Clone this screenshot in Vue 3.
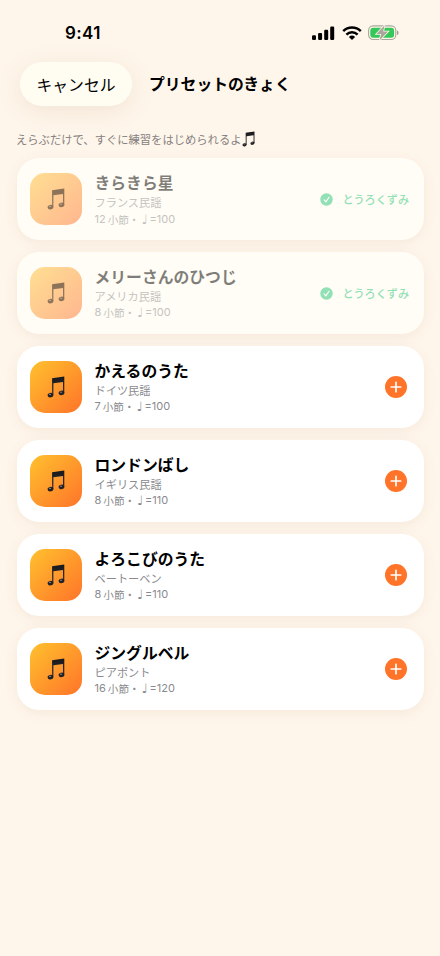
<script setup>
const songs = [
  { title: 'きらきら星', by: 'フランス民謡', bars: 12, bpm: 100, done: true },
  { title: 'メリーさんのひつじ', by: 'アメリカ民謡', bars: 8, bpm: 100, done: true },
  { title: 'かえるのうた', by: 'ドイツ民謡', bars: 7, bpm: 100 },
  { title: 'ロンドンばし', by: 'イギリス民謡', bars: 8, bpm: 110 },
  { title: 'よろこびのうた', by: 'ベートーベン', bars: 8, bpm: 110 },
  { title: 'ジングルベル', by: 'ピアポント', bars: 16, bpm: 120 },
]
</script>

<template>
  <div class="screen">
    <svg class="defs" width="0" height="0" aria-hidden="true">
      <defs>
        <linearGradient id="ink" x1="0" y1="0" x2="0" y2="1">
          <stop offset="0" stop-color="#17171b" />
          <stop offset="1" stop-color="#38343a" />
        </linearGradient>
        <symbol id="notes" viewBox="0 0 18 22">
          <path d="M5.1 2.3 17.3.6V16.4H16V5.9L6.4 7.2V19H5.1Z" fill="url(#ink)" />
          <ellipse cx="3.5" cy="19.1" rx="2.9" ry="2.2" transform="rotate(-14 3.5 19.1)" fill="#222125" />
          <ellipse cx="14.5" cy="16.9" rx="2.9" ry="2.2" transform="rotate(-14 14.5 16.9)" fill="#222125" />
          <ellipse cx="3" cy="18.4" rx="1.1" ry=".6" fill="#88817f" />
          <ellipse cx="14" cy="16.2" rx="1.1" ry=".6" fill="#88817f" />
        </symbol>
      </defs>
    </svg>

    <header class="status">
      <span class="time">9:41</span>
      <div class="indicators">
        <svg width="23" height="15" viewBox="0 0 23 15">
          <rect x="0" y="9.3" width="4" height="4.7" rx="1.2" />
          <rect x="6.1" y="6.9" width="4" height="7.1" rx="1.2" />
          <rect x="12.2" y="3.8" width="4" height="10.2" rx="1.2" />
          <rect x="18.2" y=".6" width="4" height="13.4" rx="1.2" />
        </svg>
        <svg width="20" height="15" viewBox="0 0 20 15">
          <g fill="none" stroke="#000" stroke-width="2.5">
            <path d="M1.2 5.2a12.6 12.6 0 0 1 17.6 0" />
            <path d="M4.4 8.6a8 8 0 0 1 11.2 0" />
          </g>
          <path d="M10 14 6.9 10.9a4.5 4.5 0 0 1 6.2 0Z" />
        </svg>
        <svg width="32" height="16" viewBox="0 0 32 16">
          <rect x=".6" y=".9" width="27.2" height="13.6" rx="4.6" fill="none" stroke="#aaa69c" stroke-width="1.1" />
          <path d="M29 5.6c2 .5 2 4 0 4.5Z" fill="#a09c94" />
          <rect x="2.3" y="2.7" width="23.8" height="10" rx="3" fill="#34c759" />
          <path d="M16.6.2 8.4 8.9h4.7l-1.6 6.5 8.6-8.8h-4.9Z" fill="#aaa69c" stroke="#fff6eb" stroke-width="1.5" paint-order="stroke" />
        </svg>
      </div>
    </header>

    <nav class="nav">
      <button class="cancel">キャンセル</button>
      <h1>プリセットのきょく</h1>
    </nav>

    <p class="hint">
      <span>えらぶだけで、すぐに練習をはじめられるよ</span>
      <svg width="13" height="16"><use href="#notes" /></svg>
    </p>

    <main class="list">
      <article v-for="s in songs" :key="s.title" class="card" :class="{ done: s.done }">
        <div class="art"><svg width="18" height="22"><use href="#notes" /></svg></div>
        <div class="info">
          <h2>{{ s.title }}</h2>
          <p class="by">{{ s.by }}</p>
          <p class="meta">
            <span class="num">{{ s.bars }}</span><span class="unit">小節・</span><span class="beat">♩</span><span class="num">={{ s.bpm }}</span>
          </p>
        </div>
        <div v-if="s.done" class="saved">
          <svg width="13" height="13" viewBox="0 0 13 13">
            <circle cx="6.5" cy="6.5" r="6.2" fill="#28c478" />
            <path d="m4.1 6.9 1.8 2 3.1-4.6" fill="none" stroke="#fff" stroke-width="1.15" stroke-linecap="round" stroke-linejoin="round" />
          </svg>
          <span>とうろくずみ</span>
        </div>
        <button v-else class="add">
          <svg width="22" height="22" viewBox="0 0 22 22">
            <circle cx="11" cy="11" r="11" fill="#ff7429" />
            <path d="M11 6.3v9.4M6.3 11h9.4" stroke="#fff" stroke-width="1.7" stroke-linecap="round" />
          </svg>
        </button>
      </article>
    </main>
  </div>
</template>

<style>
body {
  background: #fff6eb;
}
</style>

<style scoped>
.screen {
  box-sizing: border-box;
  width: 440px;
  height: 956px;
  overflow: hidden;
  background: #fff6eb;
  color: #000;
  font-family: "Noto Sans CJK JP", sans-serif;
}
.defs {
  display: block;
}
svg {
  flex: none;
  display: block;
}
h1, h2, p {
  margin: 0;
  white-space: nowrap;
}
button {
  border: 0;
  padding: 0;
  background: none;
  color: inherit;
  font-family: inherit;
}
.status {
  height: 62px;
  box-sizing: border-box;
  padding: 4px 40px 0 65px;
  display: flex;
  align-items: center;
  justify-content: space-between;
}
.time {
  font: 600 17px/22px Inter, sans-serif;
  letter-spacing: 0.4px;
}
.indicators {
  display: flex;
  align-items: center;
  gap: 6.5px;
}
.nav {
  display: flex;
  align-items: center;
  gap: 17px;
  padding-left: 20px;
  height: 44px;
}
.cancel {
  width: 112px;
  height: 44px;
  border-radius: 22px;
  background: #fffdf1;
  box-shadow: 0 5px 26px rgba(120, 70, 20, 0.1);
  font-size: 15.8px;
  line-height: 45px;
}
h1 {
  font-size: 15.8px;
  font-weight: 700;
  line-height: 24px;
}
.hint {
  display: flex;
  align-items: center;
  gap: 0.5px;
  height: 20px;
  margin-top: 23px;
  padding-left: 16px;
  font-size: 11.3px;
  color: #858180;
}
.list {
  display: flex;
  flex-direction: column;
  gap: 12px;
  padding: 9.4px 16.5px 0;
}
.card {
  box-sizing: border-box;
  height: 81.9px;
  display: flex;
  align-items: center;
  gap: 12.5px;
  padding: 0 14.5px 0.4px 13.5px;
  border-radius: 22px;
  background: #fff;
  box-shadow: 0 3px 14px rgba(110, 60, 10, 0.07);
}
.done {
  background: #fffdf5;
}
.done .info,
.done .saved,
.done .art svg {
  opacity: 0.5;
}
.art {
  flex: none;
  width: 52px;
  height: 52px;
  border-radius: 15px;
  background: linear-gradient(135deg, #ffc12e, #ff7429);
  display: flex;
  align-items: center;
  justify-content: center;
}
.done .art {
  background: linear-gradient(135deg, #ffdf92, #ffb68f);
}
.info {
  flex: 1;
  padding-top: 1.4px;
}
h2 {
  font-size: 15.8px;
  font-weight: 700;
  line-height: 22px;
}
.by {
  font-size: 11.2px;
  line-height: 16px;
  color: #8a8a8e;
}
.meta {
  display: flex;
  align-items: center;
  height: 17px;
  margin-top: 0.5px;
  font-size: 10.6px;
  line-height: 17px;
  color: #8a8a8e;
}
.num {
  font-family: Inter, sans-serif;
  font-size: 11px;
}
.unit {
  margin-left: 2px;
}
.beat {
  font-family: "DejaVu Sans", sans-serif;
  font-size: 13px;
  width: 10px;
  text-align: center;
}
.saved {
  display: flex;
  align-items: center;
  gap: 9px;
  font-size: 11.1px;
  font-weight: 500;
  color: #28c478;
}
.add {
  margin-right: 1.8px;
}
</style>
